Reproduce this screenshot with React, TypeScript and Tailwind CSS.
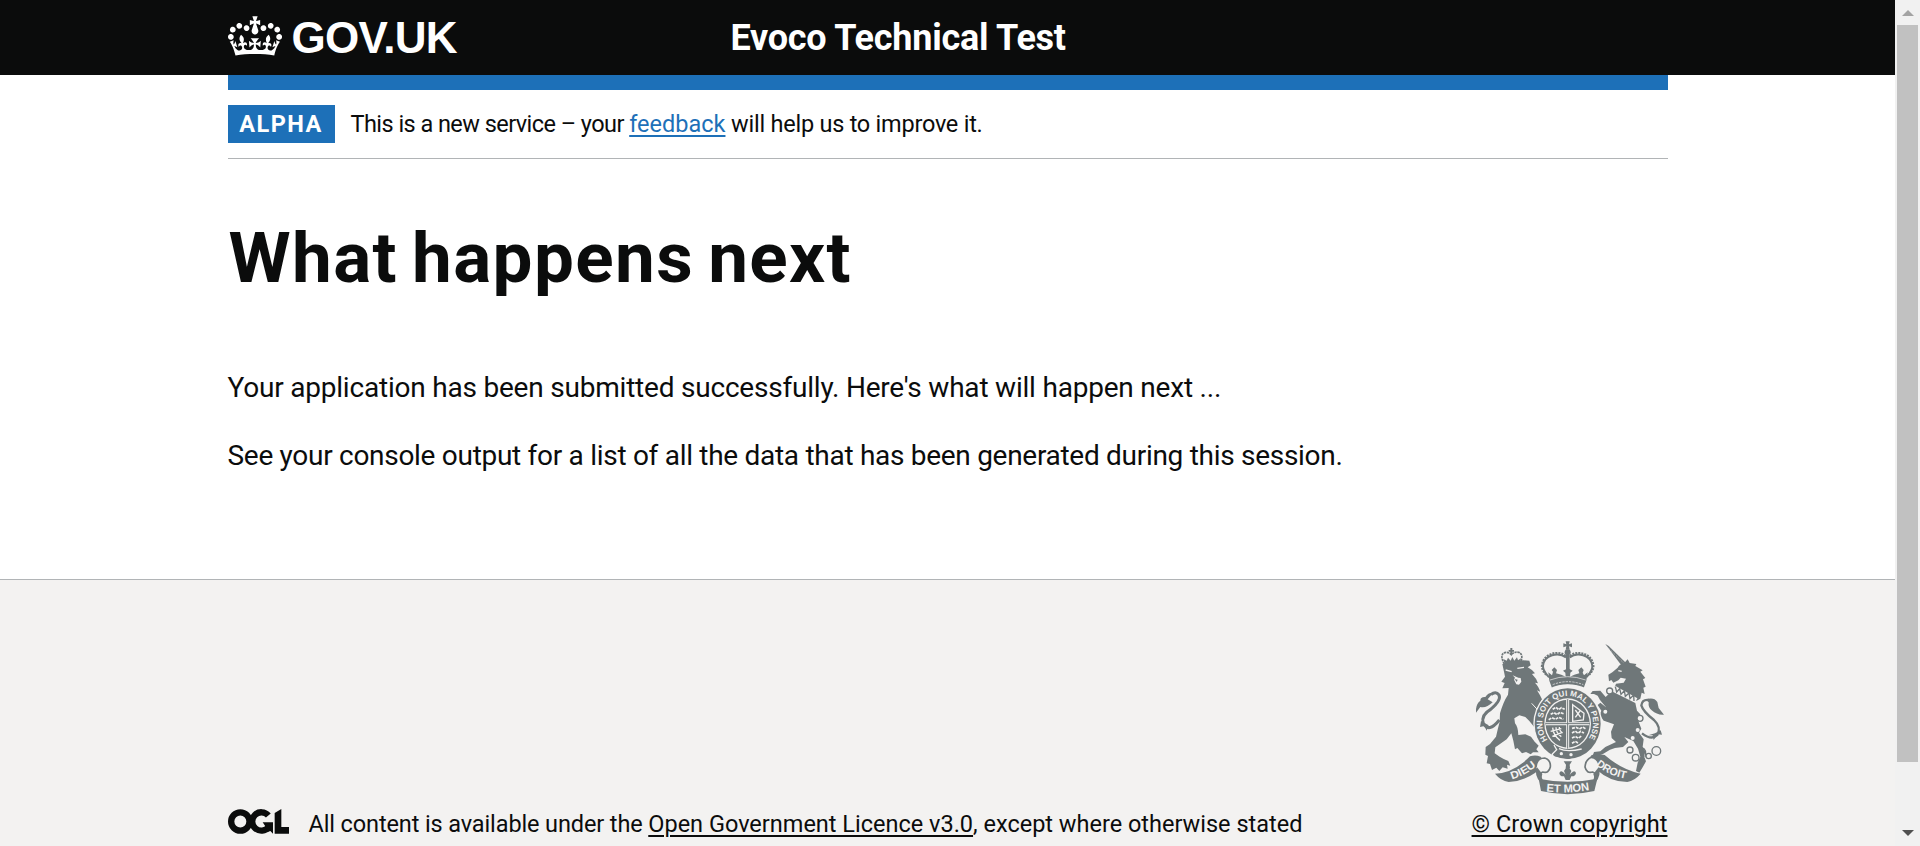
import type { ReactNode } from "react";

function CrownLogo() {
  return (
    <svg viewBox="0 0 132 97" className="h-[40px] w-[54px] shrink-0" fill="currentColor" aria-hidden="true">
      <path
        fillRule="evenodd"
        d="M25 30.2c3.5 1.5 7.7-.2 9.1-3.7 1.5-3.6-.2-7.8-3.9-9.2-3.6-1.4-7.6.3-9.1 3.9-1.4 3.5.3 7.5 3.9 9zM9 39.5c3.6 1.5 7.8-.2 9.2-3.7 1.5-3.6-.2-7.8-3.9-9.1-3.6-1.5-7.6.2-9.1 3.8-1.4 3.5.3 7.5 3.8 9zM4.4 57.2c3.5 1.5 7.7-.2 9.1-3.8 1.5-3.6-.2-7.7-3.9-9.1-3.5-1.5-7.6.3-9.1 3.8-1.4 3.5.3 7.6 3.9 9.1zm38.3-21.4c3.5 1.5 7.7-.2 9.1-3.8 1.5-3.6-.2-7.7-3.9-9.1-3.6-1.5-7.6.3-9.1 3.8-1.3 3.6.4 7.7 3.9 9.1zm64.4-5.6c-3.6 1.5-7.8-.2-9.1-3.7-1.5-3.6.2-7.8 3.8-9.2 3.6-1.4 7.7.3 9.2 3.9 1.3 3.5-.4 7.5-3.9 9zm15.9 9.3c-3.6 1.5-7.7-.2-9.1-3.7-1.5-3.6.2-7.8 3.7-9.1 3.6-1.5 7.7.2 9.2 3.8 1.5 3.5-.3 7.5-3.8 9zm4.7 17.7c-3.6 1.5-7.8-.2-9.2-3.8-1.5-3.6.2-7.7 3.9-9.1 3.6-1.5 7.7.3 9.2 3.8 1.3 3.5-.4 7.6-3.9 9.1zM89.3 35.8c-3.6 1.5-7.8-.2-9.2-3.8-1.4-3.6.2-7.7 3.9-9.1 3.6-1.5 7.7.3 9.2 3.8 1.4 3.6-.3 7.7-3.9 9.1zM69.7 17.7l8.9 4.7V9.3l-8.9 2.8c-.2-.3-.5-.6-.9-.9L72.4 0H59.6l3.5 11.2c-.3.3-.6.5-.9.9l-8.8-2.8v13.1l8.8-4.7c.3.3.6.7.9.9l-5 15.4v.1c-.2.8-.4 1.6-.4 2.4 0 4.1 3.1 7.5 7 8.1h.2c.3 0 .7.1 1 .1.4 0 .7 0 1-.1h.2c4-.6 7.1-4.1 7.1-8.1 0-.8-.1-1.7-.4-2.4V34l-5.1-15.4c.4-.2.7-.6 1-.9zM66 92.8c16.9 0 32.8 1.1 47.1 3.2 4-16.9 8.9-26.7 14-33.5l-9.6-3.4c1 4.9 1.1 7.2 0 10.2-1.5-1.4-3-4.3-4.2-8.7L108.6 76c2.8-2 5-3.2 7.5-3.3-4.4 9.4-10 11.9-13.6 11.2-4.3-.8-6.3-4.6-5.6-7.9 1-4.7 5.7-5.9 8-.5 4.3-8.7-3-11.4-7.6-8.8 7.1-7.2 7.9-13.5 2.1-21.1-8 6.1-8.1 12.3-4.5 20.8-4.7-5.4-12.1-2.5-9.5 6.2 3.4-5.2 7.9-2 7.2 3.1-.6 4.3-6.4 7.8-13.5 7.2-10.3-.9-10.9-8-11.2-13.8 2.5-.5 7.1 1.8 11 7.3L80.2 60c-4.1 4.4-8 5.3-12.3 5.4 1.4-4.4 8-11.6 8-11.6H55.5s6.4 7.2 7.9 11.6c-4.2-.1-8-1-12.3-5.4l1.4 16.4c3.9-5.5 8.5-7.7 10.9-7.3-.3 5.8-.9 12.8-11.1 13.8-7.2.6-12.9-2.9-13.5-7.2-.7-5 3.8-8.3 7.1-3.1 2.7-8.7-4.6-11.6-9.4-6.2 3.7-8.5 3.6-14.7-4.6-20.8-5.8 7.6-5 13.9 2.2 21.1-4.7-2.6-11.9.1-7.7 8.8 2.3-5.5 7.1-4.2 8.1.5.7 3.3-1.3 7.1-5.7 7.9-3.5.7-9-1.8-13.5-11.2 2.5.1 4.7 1.3 7.5 3.3l-4.7-15.4c-1.2 4.4-2.7 7.2-4.3 8.7-1.1-3-.9-5.3 0-10.2l-9.5 3.4c5 6.9 9.9 16.7 14 33.5 14.8-2.1 30.8-3.2 47.7-3.2z"
      />
    </svg>
  );
}

function OglMark() {
  return (
    <svg viewBox="0 0 183 75" className="h-[25px] w-[61px] shrink-0" fill="none" stroke="currentColor" aria-hidden="true">
      <circle cx="37" cy="37.5" r="27.5" strokeWidth="19" />
      <path d="M121 19.5 A27.5 27.5 0 1 0 122 54" strokeWidth="19" />
      <path d="M104 40h31v34l-8-8-9 3-6-17z" fill="currentColor" stroke="none" />
      <path d="M140 12L160 0V54H183V74H140z" fill="currentColor" stroke="none" />
    </svg>
  );
}

const INK = "#6f7779";
const PAPER = "#f3f2f1";

function RoyalArms() {
  return (
    <svg viewBox="48 60 564 465" className="h-[155px] w-[188px]" fill={INK} aria-hidden="true">
      <defs>
        <path id="garter" d="M265 363 A76 82 0 1 1 381 363" />
        <path id="dieu" d="M154 479 Q200 466 240 428" />
        <path id="mon" d="M256 514 Q322 522 396 509" />
        <path id="droit" d="M406 433 Q444 468 504 477" />
      </defs>

      {/* Lion */}
      <g>
        <path d="M133 132Q118 104 134 98Q146 95 154 104Q162 94 176 97Q192 103 181 130" fill="none" stroke={INK} strokeWidth="5" strokeDasharray="7 2" />
        <path d="M151 84h6v6h5v5h-5v10h-6v-10h-5v-5h5zM134 133l-4-16 10 5 4-9 8 9 5-11 6 11 8-10 3 9 9-6-3 16z" />
        <path d="M127 132Q168 118 208 122L212 136L203 142Q217 149 225 160L216 162Q230 176 234 190L225 188Q238 202 240 215L231 211Q240 225 246 238L238 255L228 268L236 290L250 305L242 322L222 320L208 303L196 291L178 286L163 295L165 310Q174 320 175 345L196 343L213 350L224 365L236 377L229 388L236 397L219 397L212 403L198 396L186 400L172 384L165 388L160 362L154 340L140 358L120 372L106 382L104 400L119 410L131 417L145 423L151 437L141 434L143 446L128 442L118 453L109 443L96 450L90 432L80 430L84 408L76 404L77 381L90 372L108 350L114 325L119 305L120 280Q130 245 144 224L146 204L127 205L134 189L124 185L135 170L132 155Z" />
        <path d="M118 300Q86 340 70 310Q62 285 92 268Q125 240 117 225Q107 212 93 224" fill="none" stroke={INK} strokeWidth="9" />
        <path d="M100 218L83 238L98 247Q78 266 61 261L48 278Q46 253 61 242Q61 230 76 231Q84 217 100 218Z" />
        <path d="M63 303l-3 18 13-3 7 14 6-16z" />
        <path d="M137 150l18 5M172 145l20-3" stroke={PAPER} strokeWidth="4" />
        <path d="M158 166l7 7-3 6 7 14 8 1 7-9-2-11-7-1z" fill={PAPER} />
        <path d="M164 177l9 2-3 7z" />
        <path d="M215 250l22 24" stroke={PAPER} strokeWidth="3" />
      </g>

      {/* Crown */}
      <g>
        <path d="M317 64h12l-2 9 9-3v12l-9-3 2 10h-12l2-10-9 3V70l9 3z" />
        <circle cx="323" cy="97" r="9" />
        <path d="M318 104h11v50h-11z" />
        <path d="M318 112C296 96 252 103 249 138C248 152 258 162 267 172M329 112C350 96 393 103 397 138C398 152 388 162 379 172" fill="none" stroke={INK} strokeWidth="6" />
        <path d="M317 108C300 91 248 97 246 140C247 150 253 158 259 164M330 108C347 91 398 97 400 140C399 150 393 158 387 164" fill="none" stroke={INK} strokeWidth="7" strokeDasharray="6 3" />
        <path d="M268 182L265 157L276 166L279 155L275 150L283 142L291 150L288 160L304 164L317 170L316 158L309 152L324 145L338 152L331 158L330 170L343 164L358 160L355 150L364 142L371 150L368 158L372 166L383 157L379 182L371 204Q323 184 276 204Z" />
        <path d="M270 180Q323 160 377 180" stroke={PAPER} strokeWidth="2" fill="none" />
        <path d="M278 194Q323 176 370 194" stroke={PAPER} strokeWidth="2" strokeDasharray="7 3" fill="none" />
        <path d="M270 208Q323 184 378 208" stroke={PAPER} strokeWidth="6" fill="none" />
      </g>

      {/* Unicorn */}
      <g>
        <path d="M436 72L446 78L505 136L492 146Z" />
        <path d="M443 82l50 49" stroke={PAPER} strokeWidth="1.5" strokeDasharray="3 4" />
        <path d="M473 143Q479 132 492 130L503 118L509 129L529 132L526 138L548 151L541 155L556 174L549 178L557 200L550 203L554 222L545 218L541 236L530 242L462 206L468 191L491 188L498 176L482 173L475 181L460 188L454 180L447 184L445 164L457 157Z" />
        <path d="M475 152l10 2" stroke={PAPER} strokeWidth="4" />
        <path d="M461 205l67 37" stroke={PAPER} strokeWidth="17" />
        <path d="M466 200l4 16 9-10 4 17 10-11 3 17 11-10 3 17 11-11 1 18" stroke={INK} strokeWidth="4" fill="none" />
        <path d="M455 214L526 249L531 272L541 283L535 303L544 326L537 338L551 358L548 380L556 396L552 409L558 424L548 442L538 458L528 453L533 428L541 410L534 386L520 363L493 351L505 366L489 381L465 384L450 389L430 401L413 408L398 407L402 396L421 394L436 381L468 366L455 354L453 335L462 313L434 303L422 277L438 262L420 240L413 227L402 222L391 222L398 213L421 212L437 231Z" />
        <path d="M421 248L440 263L436 282L450 292L444 304L431 302L420 286L424 272L413 255Z" />
        <circle cx="449" cy="213" r="9" fill={PAPER} stroke={INK} strokeWidth="4" />
        <circle cx="436" cy="275" r="8" fill={PAPER} stroke={INK} strokeWidth="4" />
        <circle cx="540" cy="295" r="9" fill={PAPER} stroke={INK} strokeWidth="4" />
        <circle cx="533" cy="330" r="6" fill={PAPER} />
        <circle cx="518" cy="354" r="6" fill={PAPER} />
        <circle cx="510" cy="390" r="9" fill={PAPER} stroke={INK} strokeWidth="4" />
        <circle cx="527" cy="413" r="10" fill={PAPER} stroke={INK} strokeWidth="4" />
        <circle cx="566" cy="408" r="8" fill="none" stroke={INK} strokeWidth="4" />
        <circle cx="589" cy="393" r="13" fill="none" stroke={INK} strokeWidth="4" />
        <path d="M547 384q14 5 8 27" stroke={INK} strokeWidth="4" fill="none" />
        <path d="M546 340Q575 362 592 345Q605 322 582 300Q549 274 544 256Q547 237 567 240" fill="none" stroke={INK} strokeWidth="7" />
        <path d="M557 239Q581 230 592 246L596 264L612 284Q592 286 575 271Q564 262 566 247Z" />
        <path d="M585 340l17-9 4 13-13-1-12 17-3-14-13 0z" />
      </g>

      {/* Garter and shield */}
      <g>
        <ellipse cx="323" cy="311" rx="103" ry="110" fill={PAPER} />
        <ellipse cx="323" cy="311" rx="99" ry="106" />
        <ellipse cx="323" cy="311" rx="70" ry="76" fill={PAPER} />
        <ellipse cx="323" cy="311" rx="66" ry="72" />
        <path d="M323 240v145M258 311h130" stroke={PAPER} strokeWidth="9" />
        <path d="M323 238v148M256 311h134" stroke={INK} strokeWidth="3" />
        <g stroke={PAPER} strokeWidth="5" fill="none">
          <path d="M278 268l10-6 8 7 8-6 10 5M272 283l10-5 9 6 9-7 12 5M266 299l10-6 10 5 10-6 14 6" strokeDasharray="9 3" />
          <path d="M336 339l10-6 8 7 8-6 10 5M336 354l10-5 9 6 9-7M336 370l10-6 8 5M336 325l12-3 10 5 10-6 10 6" strokeDasharray="9 3" />
          <path d="M338 254l34 26-2 20-32 4zM346 270l16 22M362 270l-16 22" strokeWidth="4" />
          <path d="M278 323q2 24 22 38M288 322q0 18 16 28M298 321q0 12 10 18M272 334l32-8M277 349l30-12" strokeWidth="4" />
        </g>
        <text fill={PAPER} fontFamily="Liberation Sans" fontWeight="700" fontSize="24">
          <textPath href="#garter" startOffset="4" textLength="348" lengthAdjust="spacing">HONI SOIT QUI MAL Y PENSE</textPath>
        </text>
        <path d="M262 383l24-9 9 13 26 8 43-5 8 9-45 18-43-8z" />
        <path d="M282 375l8 14-13 13 1 8M297 386q24 11 68 1" stroke={PAPER} strokeWidth="4" fill="none" />
        <circle cx="304" cy="401" r="5" fill={PAPER} />
        <circle cx="333" cy="404" r="5" fill={PAPER} />
      </g>

      {/* Motto ribbon */}
      <g>
        <path d="M105 461Q160 460 210 409Q226 403 242 410L254 428Q238 447 226 458Q188 484 146 486Q122 482 105 461Z" />
        <path d="M228 441Q230 414 254 414Q273 420 271 441Q266 462 248 456Q236 458 246 482" fill={PAPER} stroke={INK} strokeWidth="5" />
        <path d="M230 440Q222 466 241 486L247 462Z" />
        <path d="M542 461Q486 450 434 405Q415 400 395 405L382 424Q400 432 410 449Q451 486 502 486Q524 482 542 461Z" />
        <path d="M418 441Q416 414 394 412Q376 420 375 441Q380 462 398 456Q410 458 402 482" fill={PAPER} stroke={INK} strokeWidth="5" />
        <path d="M417 440Q424 466 407 486L400 462Z" />
        <path d="M236 476Q322 494 412 476L403 513Q322 532 243 513Z" />
        <text fill={PAPER} fontFamily="Liberation Sans" fontWeight="700" fontSize="32">
          <textPath href="#dieu" textLength="84" lengthAdjust="spacingAndGlyphs" startOffset="2">DIEU</textPath>
        </text>
        <text fill={PAPER} fontFamily="Liberation Sans" fontWeight="700" fontSize="34">
          <textPath href="#mon" textLength="130" lengthAdjust="spacingAndGlyphs" startOffset="3">ET MON</textPath>
        </text>
        <text fill={PAPER} fontFamily="Liberation Sans" fontWeight="700" fontSize="32">
          <textPath href="#droit" textLength="100" lengthAdjust="spacingAndGlyphs" startOffset="2">DROIT</textPath>
        </text>
        <path d="M311 424h25l-7 10 1 10h-13l1-10z" />
        <path d="M323 436L334 453L329 465Q344 446 348 459Q346 470 334 469L329 480H317L312 469Q299 470 298 459Q303 446 317 465L312 453Z" />
      </g>
    </svg>
  );
}

function TextLink({ className, children }: { className: string; children: ReactNode }) {
  return (
    <a href="#" className={`underline decoration-[2px] underline-offset-[3px] ${className}`}>
      {children}
    </a>
  );
}

function Scrollbar() {
  return (
    <div className="flex h-full w-[25px] shrink-0 flex-col items-center bg-[#f1f1f1]" aria-hidden="true">
      <div className="flex h-[25px] items-center">
        <svg viewBox="0 0 12 6" className="h-[6px] w-[12px]" fill="#a3a3a3">
          <path d="M6 0l6 6H0z" />
        </svg>
      </div>
      <div className="h-[737px] w-[21px] bg-[#c1c1c1]" />
      <div className="flex flex-1 items-end pb-[10px]">
        <svg viewBox="0 0 12 6" className="h-[6px] w-[12px]" fill="#505050">
          <path d="M0 0h12l-6 6z" />
        </svg>
      </div>
    </div>
  );
}

export default function App() {
  return (
    <div className="flex h-[846px] overflow-hidden bg-white font-['Roboto','Noto_Sans',sans-serif] text-[#0b0c0c]">
      <div className="flex min-w-0 flex-1 flex-col">
        <header className="h-[75px] shrink-0 bg-[#0b0c0c] text-white">
          <div className="mx-auto flex h-full w-[1440px]">
            <div className="flex w-[503px] items-start gap-[10px] pt-[16px]">
              <CrownLogo />
              <span className="font-['Liberation_Sans',sans-serif] text-[44px] leading-[44px] font-bold tracking-[-0.7px]">GOV.UK</span>
            </div>
            <span className="pt-[16px] text-[36px] leading-[44px] font-bold tracking-[-0.25px]">Evoco Technical Test</span>
          </div>
        </header>

        <div className="mx-auto w-[1440px] shrink-0">
          <div className="h-[15px] bg-[#1d70b8]" />
          <div className="flex items-start border-b border-[#b1b4b6] pt-[15px] pb-[15px]">
            <strong className="flex h-[38px] w-[107px] items-center justify-center bg-[#1d70b8] pt-px text-[23.5px] font-bold tracking-[1.5px] text-white">
              ALPHA
            </strong>
            <span className="pt-px pl-[16px] text-[23.5px] leading-[36px]">
              <span className="tracking-[-0.55px]">This is a new service – your </span>
              <TextLink className="text-[#1d70b8]">feedback</TextLink>
              <span className="tracking-[-0.24px]"> will help us to improve it.</span>
            </span>
          </div>

          <main className="h-[420px] pt-[61px]">
            <h1 className="pl-px text-[71px] leading-[75px] font-bold tracking-[1.4px] [word-spacing:-5px]">What happens next</h1>
            <p className="mt-[74px] text-[28px] leading-[38px] tracking-[-0.21px]">
              Your application has been submitted successfully. Here's what will happen next ...
            </p>
            <p className="mt-[30px] text-[28px] leading-[38px] tracking-[-0.29px]">
              See your console output for a list of all the data that has been generated during this session.
            </p>
          </main>
        </div>

        <footer className="flex-1 border-t border-[#b1b4b6] bg-[#f3f2f1]">
          <div className="mx-auto flex w-[1440px] items-end justify-between pt-[60px] text-[23.5px] leading-[36px]">
            <div className="flex items-start gap-[20px]">
              <div className="pt-[3px]">
                <OglMark />
              </div>
              <span>
                <span className="tracking-[-0.12px]">All content is available under the </span>
                <TextLink className="">Open Government Licence v3.0</TextLink>, except where otherwise stated
              </span>
            </div>
            <div className="flex w-[197px] flex-col items-end">
              <div className="pr-[4px]">
                <RoyalArms />
              </div>
              <div className="pt-[11px]">
                <TextLink className="tracking-[0.08px] whitespace-nowrap">© Crown copyright</TextLink>
              </div>
            </div>
          </div>
        </footer>
      </div>
      <Scrollbar />
    </div>
  );
}
